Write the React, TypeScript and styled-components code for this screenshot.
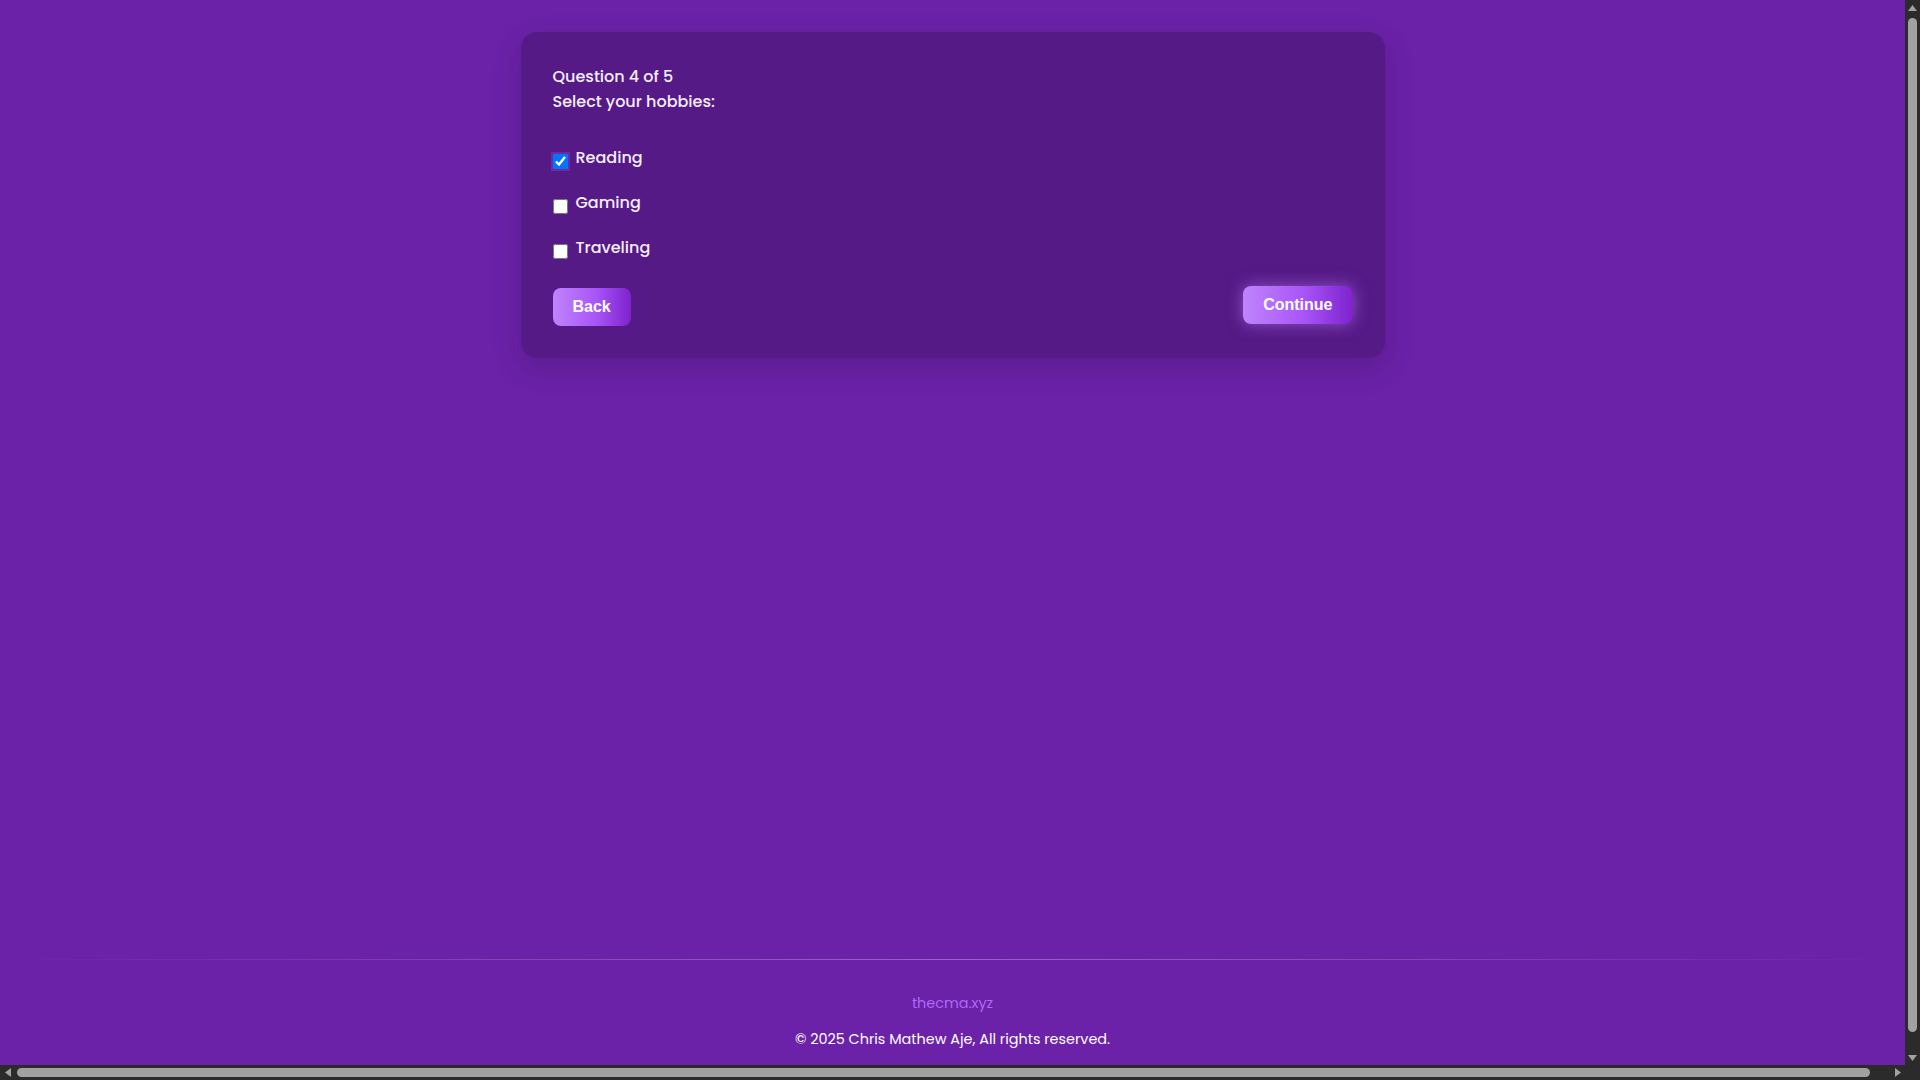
import { useState } from "react"
import styled, { createGlobalStyle } from "styled-components"

const PAGE = "#6b21a8"
const TEXT = "#f5eefc"
const BAR = "#2b2b2b"
const THUMB = "#a1a1a1"

const GlobalStyle = createGlobalStyle`
    html, body {
        margin: 0;
        overflow: hidden;
    }
    body {
        background: ${PAGE};
        font-family: "Poppins", "Inter", "Noto Sans", sans-serif;
        color: ${TEXT};
    }
`

/* window frame: page pane plus the browser scrollbars seen in the shot */
const Frame = styled.div`
    display: grid;
    grid-template-columns: 1fr 15px;
    grid-template-rows: 1fr 15px;
    width: 100vw;
    height: 100vh;
    background: ${BAR};
`

const Pane = styled.div`
    min-width: 0;
    min-height: 0;
    overflow: hidden;
    background: ${PAGE};
`

const ScrollBar = styled.div<{ $horizontal?: boolean }>`
    display: flex;
    flex-direction: ${(p) => (p.$horizontal ? "row" : "column")};
    background: ${BAR};
`

const ArrowBox = styled.div`
    flex: 0 0 15px;
    width: 15px;
    height: 15px;
    display: flex;
    align-items: center;
    justify-content: center;
`

const Track = styled.div<{ $horizontal?: boolean }>`
    flex: 1;
    display: flex;
    flex-direction: ${(p) => (p.$horizontal ? "row" : "column")};
    padding: ${(p) => (p.$horizontal ? "3px 20px 3px 2px" : "3px 3px 18px 3px")};
`

const Thumb = styled.div`
    flex: 1;
    background: ${THUMB};
    border-radius: 5px;
`

const Corner = styled.div`
    background: ${BAR};
`

const Arrow = ({ dir }: { dir: "up" | "down" | "left" | "right" }) => {
    const pts = {
        up: "4.5,0 9,6 0,6",
        down: "0,0 9,0 4.5,6",
        left: "0,4.5 6,0 6,9",
        right: "0,0 6,4.5 0,9",
    }[dir]
    const w = dir === "up" || dir === "down" ? 9 : 6
    const h = dir === "up" || dir === "down" ? 6 : 9
    return (
        <ArrowBox>
            <svg width={w} height={h} viewBox={`0 0 ${w} ${h}`}>
                <polygon points={pts} fill={THUMB} />
            </svg>
        </ArrowBox>
    )
}

const Page = styled.div`
    min-height: 100vh;
    display: flex;
    flex-direction: column;
`

const Main = styled.main`
    flex: 1 0 auto;
    padding: 32px 16px;
`

const Card = styled.div`
    max-width: 800px;
    margin: 0 auto;
    padding: 32px;
    background: rgba(0, 0, 0, 0.2);
    border-radius: 16px;
    box-shadow: 0 10px 30px rgba(0, 0, 0, 0.15);
`

const Title = styled.p`
    margin: 0;
    font-size: 16px;
    line-height: 25px;
    font-weight: 500;
`

const Options = styled.div`
    display: flex;
    flex-direction: column;
    gap: 20px;
    margin-top: 31px;
`

const OptionRow = styled.label`
    display: flex;
    align-items: flex-start;
    gap: 8px;
    font-size: 16px;
    line-height: 25px;
    font-weight: 500;
    cursor: pointer;
`

const Check = styled.input`
    color-scheme: light;
    width: 15px;
    height: 15px;
    margin: 9px 0 0 0;

    &:checked {
        box-shadow: 0 0 0 2px #6a2aa4;
    }
`

const Actions = styled.div`
    display: flex;
    justify-content: space-between;
    align-items: flex-start;
    margin-top: 28px;
`

const NavButton = styled.button<{ $glow?: boolean }>`
    border: none;
    border-radius: 8px;
    padding: 10px 20px;
    font-family: "Liberation Sans", Arial, sans-serif;
    font-size: 16px;
    line-height: 18px;
    font-weight: 700;
    color: #ffffff;
    background: linear-gradient(90deg, #c084fc 0%, #a855f7 55%, #7e22ce 100%);
    cursor: pointer;
    ${(p) => p.$glow && `
        transform: translateY(-2px);
        box-shadow: 0 0 16px rgba(192, 132, 252, 0.55);
    `}
`

const Footer = styled.footer`
    display: flex;
    flex-direction: column;
    align-items: center;
    padding: 0 0 30px;
`

const Divider = styled.div`
    align-self: stretch;
    height: 1px;
    margin-bottom: 32px;
    background: linear-gradient(90deg, transparent 0%, rgba(255, 255, 255, 0.3) 50%, transparent 100%);
`

const SiteLink = styled.a`
    font-size: 14.4px;
    line-height: 22px;
    color: #b267f6;
    text-decoration: none;
`

const Copyright = styled.p`
    margin: 14px 0 0;
    font-size: 14.4px;
    line-height: 22px;
    color: #ffffff;
`

const hobbies = ["Reading", "Gaming", "Traveling"]

const App = () => {
    const [picked, setPicked] = useState<string[]>(["Reading"])

    const toggle = (h: string) => {
        setPicked((prev) => prev.includes(h) ? prev.filter((x) => x !== h) : [...prev, h])
    }

    return (
    <>
        <GlobalStyle />
        <Frame>
            <Pane>
                <Page>
                    <Main>
                        <Card>
                            <Title>Question 4 of 5</Title>
                            <Title>Select your hobbies:</Title>
                            <Options>
                                {hobbies.map((h) => (
                                    <OptionRow key={h}>
                                        <Check type="checkbox" checked={picked.includes(h)} onChange={() => toggle(h)} />
                                        {h}
                                    </OptionRow>
                                ))}
                            </Options>
                            <Actions>
                                <NavButton>Back</NavButton>
                                <NavButton $glow>Continue</NavButton>
                            </Actions>
                        </Card>
                    </Main>
                    <Footer>
                        <Divider />
                        <SiteLink href="#">thecma.xyz</SiteLink>
                        <Copyright>© 2025 Chris Mathew Aje, All rights reserved.</Copyright>
                    </Footer>
                </Page>
            </Pane>
            <ScrollBar>
                <Arrow dir="up" />
                <Track><Thumb /></Track>
                <Arrow dir="down" />
            </ScrollBar>
            <ScrollBar $horizontal>
                <Arrow dir="left" />
                <Track $horizontal><Thumb /></Track>
                <Arrow dir="right" />
            </ScrollBar>
            <Corner />
        </Frame>
    </>)
}

export default App
